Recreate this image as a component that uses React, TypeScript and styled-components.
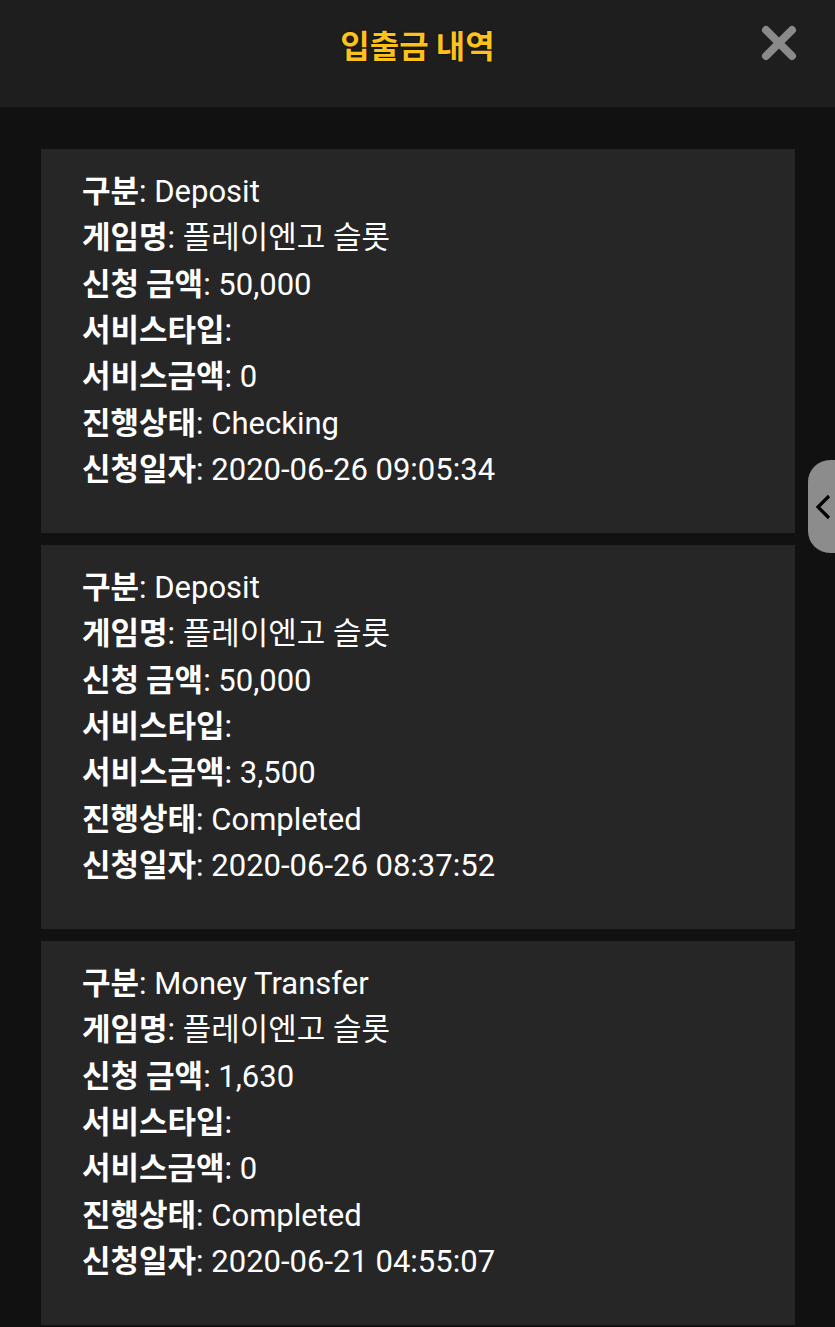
import styled, { createGlobalStyle } from "styled-components";

const GlobalStyle = createGlobalStyle`
  html, body {
    margin: 0;
    padding: 0;
    background: #111111;
  }
  body {
    font-family: Roboto, "Noto Sans CJK KR", sans-serif;
    color: #ffffff;
  }
`;

const Page = styled.div`
  min-height: 1327px;
  background: #111111;
`;

const Header = styled.header`
  align-items: center;
  background: #1e1e1e;
  display: flex;
  height: 107px;
  justify-content: center;
  position: relative;
`;

const Title = styled.h1`
  color: #fcc21b;
  font-family: "Noto Sans CJK KR", sans-serif;
  font-size: 32px;
  font-weight: 700;
  margin: 0 0 20px;
  text-shadow: 0 0 2px #000;
`;

const CloseButton = styled.button`
  background: none;
  border: 0;
  cursor: pointer;
  padding: 0;
  position: absolute;
  right: 38px;
  top: 25px;
`;

const List = styled.main`
  display: flex;
  flex-direction: column;
  gap: 12px;
  padding: 42px 40px 0 41px;
`;

const Card = styled.article`
  background: #262626;
  height: 384px;
  box-sizing: border-box;
  padding: 20px 41px 0;
`;

const Row = styled.p`
  font-size: 31px;
  height: 46.33px;
  line-height: 46px;
  margin: 0;
  white-space: nowrap;
`;

const Label = styled.strong`
  font-family: "Noto Sans CJK KR", sans-serif;
  font-weight: 700;
  line-height: 1;
`;

const SideTab = styled.button`
  align-items: center;
  background: #8c8c8c;
  border: 0;
  border-radius: 22px 0 0 22px;
  display: flex;
  height: 93px;
  justify-content: flex-start;
  padding: 0 0 0 7px;
  position: fixed;
  right: 0;
  top: 460px;
  width: 27px;
`;

const CloseIcon = () => (
  <svg width="36" height="36" viewBox="0 0 36 36">
    <path
      d="M5 5 L31 31 M31 5 L5 31"
      stroke="#8a8a8a"
      strokeWidth="8"
      strokeLinecap="round"
    />
  </svg>
);

const ChevronIcon = () => (
  <svg width="16" height="26" viewBox="0 0 16 26">
    <path d="M14 2 L3 13 L14 24" stroke="#000" strokeWidth="3.2" fill="none" />
  </svg>
);

type Entry = {
  kind: string;
  game: string;
  amount: string;
  serviceType: string;
  serviceAmount: string;
  status: string;
  date: string;
};

const entries: Entry[] = [
  {
    kind: "Deposit",
    game: "플레이엔고 슬롯",
    amount: "50,000",
    serviceType: "",
    serviceAmount: "0",
    status: "Checking",
    date: "2020-06-26 09:05:34",
  },
  {
    kind: "Deposit",
    game: "플레이엔고 슬롯",
    amount: "50,000",
    serviceType: "",
    serviceAmount: "3,500",
    status: "Completed",
    date: "2020-06-26 08:37:52",
  },
  {
    kind: "Money Transfer",
    game: "플레이엔고 슬롯",
    amount: "1,630",
    serviceType: "",
    serviceAmount: "0",
    status: "Completed",
    date: "2020-06-21 04:55:07",
  },
];

const Field = ({ label, value }: { label: string; value: string }) => (
  <Row>
    <Label>{label}</Label>: {value}
  </Row>
);

export default function App() {
  return (
    <Page>
      <GlobalStyle />
      <Header>
        <Title>입출금 내역</Title>
        <CloseButton aria-label="close">
          <CloseIcon />
        </CloseButton>
      </Header>
      <List>
        {entries.map((e, i) => (
          <Card key={i}>
            <Field label="구분" value={e.kind} />
            <Field label="게임명" value={e.game} />
            <Field label="신청 금액" value={e.amount} />
            <Field label="서비스타입" value={e.serviceType} />
            <Field label="서비스금액" value={e.serviceAmount} />
            <Field label="진행상태" value={e.status} />
            <Field label="신청일자" value={e.date} />
          </Card>
        ))}
      </List>
      <SideTab aria-label="open">
        <ChevronIcon />
      </SideTab>
    </Page>
  );
}
